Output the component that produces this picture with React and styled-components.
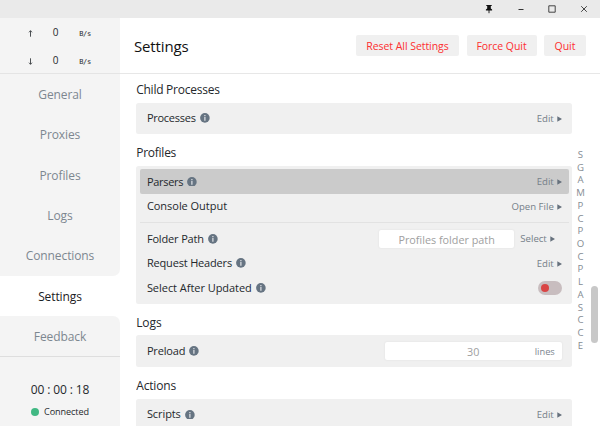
import React from "react";
import styled, { createGlobalStyle } from "styled-components";

const Global = createGlobalStyle`
  * { box-sizing: border-box; }
  html, body { margin: 0; height: 100%; overflow: hidden; background: #fff; }
  body { font-family: "Open Sans", "Noto Sans", sans-serif; color: #24282c; }
`;

const Window = styled.div`
  width: 600px;
  height: 426px;
  display: flex;
  flex-direction: column;
  overflow: hidden;
  background: #fff;
`;

const TitleBar = styled.header`
  height: 18px;
  flex: none;
  background: #eaeaea;
  display: flex;
  justify-content: flex-end;
`;

const WindowButton = styled.div`
  width: 31.8px;
  display: flex;
  align-items: center;
  justify-content: center;
  svg { display: block; }
`;

const Body = styled.div`
  flex: 1;
  min-height: 0;
  display: flex;
`;

const Sidebar = styled.aside`
  width: 120px;
  flex: none;
  display: flex;
  flex-direction: column;
`;

const Traffic = styled.div`
  height: 56px;
  flex: none;
  background: #f4f4f4;
  border-bottom: 1px solid #e4e4e4;
`;

const TrafficRow = styled.div`
  height: 28.4px;
  display: grid;
  grid-template-columns: 20px 30px 29px;
  padding-left: 20.5px;
  align-items: center;
  justify-items: center;
  font-size: 10px;
  line-height: 27px;
  svg { display: block; margin-top: 2px; }
`;

const Unit = styled.span`
  font: 7px "DejaVu Sans Mono", monospace;
  letter-spacing: -0.3px;
  padding-top: 3px;
`;

const NavGroup = styled.nav`
  background: #f4f4f4;
  flex: none;
  height: ${(p) => p.$height}px;
  border-radius: ${(p) => p.$radius};
  border-bottom: ${(p) => (p.$divider ? "1px solid #dedede" : "0")};
`;

const NavItem = styled.div`
  height: 40.25px;
  flex: none;
  display: flex;
  align-items: center;
  justify-content: center;
  padding-top: 1px;
  font-size: 12px;
  letter-spacing: ${(p) => p.$spacing ?? -0.1}px;
  color: ${(p) => (p.$active ? "#1c2024" : "#7d8790")};
`;

const Status = styled.div`
  flex: 1;
  background: #f4f4f4;
  display: flex;
  flex-direction: column;
  align-items: center;
  padding-top: 24px;
`;

const Timer = styled.div`
  font-size: 12px;
  line-height: 18px;
  letter-spacing: -0.1px;
  white-space: pre;
`;

const Connection = styled.div`
  margin-top: 4px;
  display: flex;
  align-items: center;
  gap: 5px;
  font-size: 9.1px;
  letter-spacing: -0.1px;
  line-height: 18px;
`;

const Dot = styled.i`
  width: 8px;
  height: 8px;
  border-radius: 50%;
  background: #41b883;
`;

const Main = styled.main`
  flex: 1;
  min-width: 0;
  display: flex;
  flex-direction: column;
`;

const Heading = styled.div`
  height: 56px;
  flex: none;
  border-bottom: 1px solid #e7e7e7;
  padding: 0 14px;
  display: flex;
  align-items: center;
  justify-content: space-between;
`;

const Title = styled.h1`
  margin: 0;
  font-size: 15px;
  line-height: 22px;
  font-weight: 400;
  letter-spacing: -0.15px;
  color: #111;
`;

const Buttons = styled.div`
  display: flex;
  gap: 7.5px;
`;

const Button = styled.button`
  width: ${(p) => p.$width}px;
  height: 21.5px;
  padding: 0;
  border: 0;
  border-radius: 2px;
  background: #f0f0f0;
  color: #fd2f2f;
  font: 10.5px "Open Sans", sans-serif;
  letter-spacing: -0.05px;
  white-space: nowrap;
`;

const Scroller = styled.div`
  flex: 1;
  min-height: 0;
  display: flex;
`;

const Sections = styled.div`
  width: 436.3px;
  flex: none;
  margin-left: 16.2px;
  padding-top: 8px;
  overflow: hidden;
`;

const SectionTitle = styled.h2`
  margin: 0;
  height: 20.5px;
  line-height: 16.5px;
  font-size: 12px;
  font-weight: 400;
  letter-spacing: ${(p) => p.$spacing ?? -0.25}px;
`;

const Card = styled.section`
  padding: 3.5px;
  margin-bottom: 11px;
  background: #f0f0f0;
  border-radius: 2.5px;
`;

const RowBox = styled.div`
  height: 24.7px;
  padding: 0 7.2px;
  border-radius: 2px;
  background: ${(p) => (p.$active ? "#cbcbcb" : "transparent")};
  display: flex;
  align-items: center;
  justify-content: space-between;
`;

const Label = styled.div`
  display: flex;
  align-items: center;
  gap: 4px;
  font-size: 11px;
  line-height: 16px;
  letter-spacing: ${(p) => p.$spacing ?? -0.15}px;
  white-space: nowrap;
  svg { display: block; }
`;

const Divider = styled.hr`
  margin: 3.4px 0;
  border: 0;
  height: 1px;
  background: #e2e2e2;
`;

const Action = styled.div`
  display: flex;
  align-items: center;
  gap: 3px;
  font-size: 9.6px;
  line-height: 16px;
  color: #757f89;
  padding-top: 1px;
  white-space: nowrap;
  svg { display: block; }
`;

const FolderControl = styled.div`
  display: flex;
  align-items: center;
  gap: 6.2px;
  padding-right: 7px;
`;

const Field = styled.div`
  width: ${(p) => p.$width}px;
  height: 17.8px;
  background: #fff;
  border-radius: 2px;
  box-shadow: 0 0 2px #dcdcdc;
  display: grid;
  grid-template-columns: 1fr auto 1fr;
  align-items: center;
  font-size: 10.8px;
  line-height: 17px;
  color: #a0a0a0;
`;

const Suffix = styled.span`
  grid-column: 3;
  justify-self: end;
  padding-right: 7px;
  font-size: 9.3px;
  color: #7d868f;
`;

const Placeholder = styled.span`
  grid-column: 2;
  padding-top: 1px;
`;

const Toggle = styled.div`
  width: 24px;
  height: 14px;
  border-radius: 7px;
  padding: 0 2.8px;
  background: #c8bdbf;
  display: flex;
  align-items: center;
`;

const Knob = styled.i`
  width: 8.6px;
  height: 8.6px;
  border-radius: 50%;
  background: #d94545;
`;

const Index = styled.div`
  width: 16px;
  padding-top: 75px;
  font-size: 9.6px;
  color: #858c93;
  text-align: center;
`;

const Letter = styled.div`
  height: 12.72px;
  line-height: 12.72px;
`;

const ScrollTrack = styled.div`
  margin-left: 2.5px;
  width: 7px;
  padding-top: 211.5px;
`;

const ScrollThumb = styled.div`
  height: 57.5px;
  border-radius: 3.5px;
  background: #c8c8c8;
`;

const InfoIcon = () => (
  <svg width="9.8" height="9.8" viewBox="0 0 10 10">
    <circle cx="5" cy="5" r="4.9" fill="#667482" />
    <path d="M4.4 2.1h1.2v1.2H4.4zM4.4 4.2h1.2v3.6H4.4z" fill="#e4e7ea" />
  </svg>
);

const Caret = () => (
  <svg width="5" height="6" viewBox="0 0 5 6">
    <path d="M.3.2 5 3 .3 5.8z" fill="#66717d" />
  </svg>
);

const TrafficArrow = ({ down }) => (
  <svg width="5" height="7" viewBox="0 0 5 7">
    <path
      d={down ? "M2.5.3v6M1 4.7l1.5 1.6L4 4.7" : "M2.5 6.7v-6M1 2.3 2.5.7 4 2.3"}
      fill="none"
      stroke="#3a3e42"
      strokeWidth=".9"
    />
  </svg>
);

const Row = ({ label, info, active, spacing, children }) => (
  <RowBox $active={active}>
    <Label $spacing={spacing}>
      <span>{label}</span>
      {info && <InfoIcon />}
    </Label>
    {children}
  </RowBox>
);

const Link = ({ children }) => (
  <Action>
    <span>{children}</span>
    <Caret />
  </Action>
);

export default function App() {
  return (
    <Window>
      <Global />
      <TitleBar>
        <WindowButton>
          <svg width="8" height="10" viewBox="0 0 8 10">
            <path d="M1.3.9h5.4v1h-.9v2.7l1.3 1v1H.9v-1l1.3-1V1.9h-.9z" fill="#111" />
            <path d="M4 6v3.2" stroke="#111" strokeWidth=".9" />
          </svg>
        </WindowButton>
        <WindowButton>
          <svg width="8" height="8" viewBox="0 0 8 8">
            <path d="M1.5 4.5h5" stroke="#333" />
          </svg>
        </WindowButton>
        <WindowButton>
          <svg width="8" height="8" viewBox="0 0 8 8">
            <path d="M.8.8h6.4v6.4H.8z" fill="none" stroke="#333" strokeWidth=".9" />
          </svg>
        </WindowButton>
        <WindowButton>
          <svg width="8" height="8" viewBox="0 0 8 8">
            <path d="m1.2 1.2 5.6 5.6m0-5.6L1.2 6.8" stroke="#333" strokeWidth=".9" />
          </svg>
        </WindowButton>
      </TitleBar>
      <Body>
        <Sidebar>
          <Traffic>
            <TrafficRow>
              <TrafficArrow />
              <span>0</span>
              <Unit>B/s</Unit>
            </TrafficRow>
            <TrafficRow>
              <TrafficArrow down />
              <span>0</span>
              <Unit>B/s</Unit>
            </TrafficRow>
          </Traffic>
          <NavGroup $height={201.5} $radius="0 0 7px 0">
            <NavItem>General</NavItem>
            <NavItem>Proxies</NavItem>
            <NavItem>Profiles</NavItem>
            <NavItem>Logs</NavItem>
            <NavItem>Connections</NavItem>
          </NavGroup>
          <NavItem $active>Settings</NavItem>
          <NavGroup $height={41} $radius="0 7px 0 0" $divider>
            <NavItem>Feedback</NavItem>
          </NavGroup>
          <Status>
            <Timer>00 : 00 : 18</Timer>
            <Connection>
              <Dot />
              <span>Connected</span>
            </Connection>
          </Status>
        </Sidebar>
        <Main>
          <Heading>
            <Title>Settings</Title>
            <Buttons>
              <Button $width={103}>Reset All Settings</Button>
              <Button $width={70}>Force Quit</Button>
              <Button $width={42}>Quit</Button>
            </Buttons>
          </Heading>
          <Scroller>
            <Sections>
              <SectionTitle>Child Processes</SectionTitle>
              <Card>
                <Row label="Processes" info spacing={-0.25}><Link>Edit</Link></Row>
              </Card>
              <SectionTitle>Profiles</SectionTitle>
              <Card>
                <Row label="Parsers" info active spacing={-0.3}><Link>Edit</Link></Row>
                <Row label="Console Output" spacing={-0.03}><Link>Open File</Link></Row>
                <Divider />
                <Row label="Folder Path" info>
                  <FolderControl>
                    <Field $width={135}><Placeholder>Profiles folder path</Placeholder></Field>
                    <Link>Select</Link>
                  </FolderControl>
                </Row>
                <Row label="Request Headers" info spacing={-0.17}><Link>Edit</Link></Row>
                <Row label="Select After Updated" info spacing={-0.04}>
                  <Toggle><Knob /></Toggle>
                </Row>
              </Card>
              <SectionTitle $spacing={-0.1}>Logs</SectionTitle>
              <Card>
                <Row label="Preload" info spacing={-0.15}>
                  <Field $width={177}>
                    <Placeholder>30</Placeholder>
                    <Suffix>lines</Suffix>
                  </Field>
                </Row>
              </Card>
              <SectionTitle $spacing={-0.15}>Actions</SectionTitle>
              <Card>
                <Row label="Scripts" info spacing={-0.08}><Link>Edit</Link></Row>
              </Card>
            </Sections>
            <Index>
              {[..."SGAMPCPOCPLASCCE"].map((c, i) => <Letter key={i}>{c}</Letter>)}
            </Index>
            <ScrollTrack><ScrollThumb /></ScrollTrack>
          </Scroller>
        </Main>
      </Body>
    </Window>
  );
}
